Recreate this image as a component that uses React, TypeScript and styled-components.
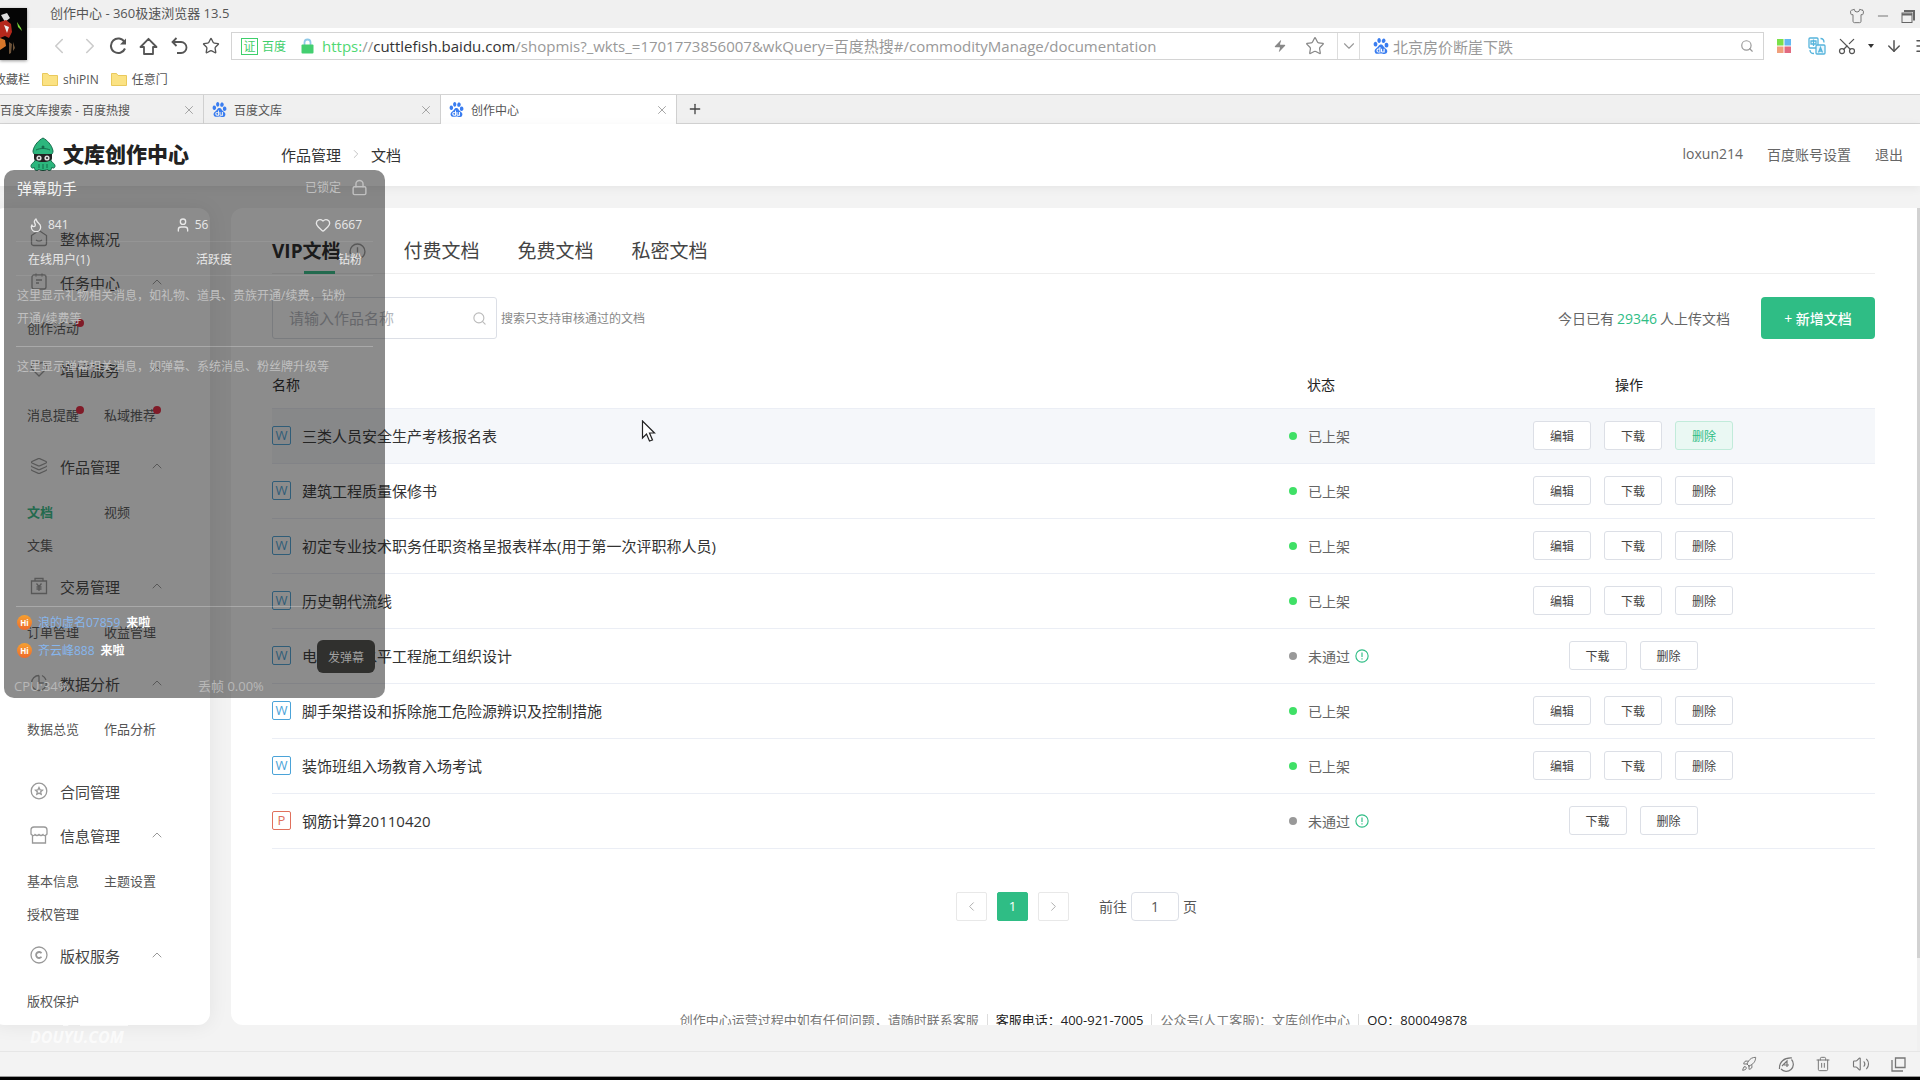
import React from 'react';
import styled, { createGlobalStyle } from 'styled-components';
import {
  ChevronLeft, ChevronRight, ChevronUp, ChevronDown, RotateCw, Star, Search, Scissors, ArrowDown,
  Shirt, Minus, Plus, X, Lock, Flame, User, Heart, Rocket, Trash2, Volume2, Menu, Zap, Layers,
} from 'lucide-react';
import { SiBaidu } from 'react-icons/si';

const GREEN = '#2fbd85';
const UI_FONT = '"Open Sans", "Noto Sans CJK SC", sans-serif';

const Global = createGlobalStyle`
  * { box-sizing: border-box; }
  body { margin: 0; overflow: hidden; font-family: ${UI_FONT}; font-size: 15px; color: #333; }
  button, input { font-family: inherit; margin: 0; }
  button { padding: 0; border: 0; background: none; cursor: pointer; color: inherit; }
  a { color: inherit; text-decoration: none; }
  svg { display: block; flex: none; }
`;

/* ---------- browser frame ---------- */

const Shell = styled.div`
  position: relative;
  display: flex;
  flex-direction: column;
  height: 100vh;
  overflow: hidden;
  background: #fff;
`;

const TitleBar = styled.header`
  display: flex;
  align-items: center;
  height: 28px;
  flex: none;
  padding: 0 5px 2px 50px;
  background: #f0f0f0;
  font-size: 13px;
  line-height: 18px;
  color: #555;
`;

const WindowControls = styled.div`
  display: flex;
  align-items: center;
  gap: 10px;
  margin: 6px 0 0 auto;
  color: #777;
`;

const ToolBar = styled.div`
  display: flex;
  align-items: center;
  height: 36px;
  flex: none;
  padding-left: 46px;
`;

const NavButtons = styled.div`
  display: flex;
  align-items: center;
  gap: 12px;
  width: 185px;
  flex: none;
`;

const NavButton = styled.button<{ $faded?: boolean }>`
  display: grid;
  place-items: center;
  width: 19px;
  height: 28px;
  color: ${(p) => (p.$faded ? '#ccc' : '#555')};
`;

const AddressBar = styled.div`
  display: flex;
  align-items: center;
  flex: 1;
  min-width: 0;
  height: 28px;
  padding-left: 9px;
  border: 1px solid #d4d4d4;
`;

const Cert = styled.span`
  display: grid;
  place-items: center;
  width: 17px;
  height: 17px;
  border: 1px solid #3ecf6b;
  font-size: 12px;
  line-height: 15px;
  color: #3ecf6b;
`;

const CertName = styled.span`
  margin: 0 15px 0 4px;
  font-size: 12px;
  color: #3ecf6b;
`;

const Url = styled.div`
  flex: 1;
  min-width: 0;
  padding-left: 8px;
  overflow: hidden;
  white-space: nowrap;
  font-size: 15px;
  line-height: 24px;
  color: #999;
`;

const Scheme = styled.span`
  color: #4fd873;
`;

const Domain = styled.span`
  color: #333;
`;

const AddressTools = styled.div`
  display: flex;
  align-items: center;
  gap: 18px;
  height: 100%;
  padding-right: 12px;
  color: #888;
`;

const DropButton = styled.button`
  display: grid;
  place-items: center;
  width: 23px;
  height: 26px;
  border: solid #ddd;
  border-width: 0 1px;
  color: #999;
`;

const WebSearch = styled.label`
  display: flex;
  align-items: center;
  gap: 4px;
  width: 403px;
  padding: 0 9px 0 13px;
  color: #999;

  input {
    flex: 1;
    min-width: 0;
    padding: 0;
    border: 0;
    outline: 0;
    background: none;
    font-size: 15px;
    color: #999;
  }
`;

const Extensions = styled.div`
  display: flex;
  align-items: center;
  gap: 11px;
  width: 156px;
  flex: none;
  padding-left: 13px;
  overflow: hidden;
  color: #555;

  svg:first-child { margin-right: 6px; }
`;

const UprightScissors = styled(Scissors)`
  transform: rotate(-90deg);
`;

const Bookmarks = styled.nav`
  display: flex;
  align-items: center;
  gap: 12px;
  height: 30px;
  flex: none;
  margin-left: -6px;
  font-size: 12px;
  color: #555;
`;

const Bookmark = styled.a`
  display: flex;
  align-items: center;
  gap: 5px;
`;

const TabStrip = styled.div`
  display: flex;
  height: 30px;
  flex: none;
  border: solid #d4d4d4;
  border-width: 1px 0;
  background: #f0f0f0;
  font-size: 12px;
  color: #555;
`;

const BrowserTab = styled.div<{ $width: number; $active?: boolean }>`
  display: flex;
  align-items: center;
  gap: 7px;
  width: ${(p) => p.$width}px;
  height: 29px;
  padding: 0 7px 0 ${(p) => (p.$width < 210 ? 0 : 8)}px;
  border-right: 1px solid #d0d0d0;
  background: ${(p) => (p.$active ? '#fff' : 'linear-gradient(#d4d4d4, #d4d4d4) bottom / 100% 1px no-repeat')};
  white-space: nowrap;

  span { flex: 1; }
  button { color: #999; }
`;

const NewTab = styled.button`
  display: grid;
  place-items: center;
  width: 36px;
  color: #444;
`;

const StatusBar = styled.footer`
  display: flex;
  align-items: center;
  justify-content: flex-end;
  gap: 21px;
  height: 26px;
  flex: none;
  padding-right: 14px;
  border-top: 1px solid #e6e6e6;
  border-bottom: 1px solid #999;
  background: #f3f3f3;
  color: #777;
`;

const Bezel = styled.div`
  height: 3px;
  flex: none;
  background: #000;
`;

/* ---------- page ---------- */

const Page = styled.div`
  display: flex;
  flex-direction: column;
  flex: 1;
  min-height: 0;
  background: #f3f3f3;
`;

const PageHeader = styled.header`
  position: relative;
  display: flex;
  align-items: center;
  height: 62px;
  flex: none;
  padding: 0 17px 2px 29px;
  background: #fff;
  box-shadow: 0 2px 10px rgba(0, 0, 0, 0.06);
`;

const Brand = styled.a`
  display: flex;
  align-items: center;
  gap: 6px;
  width: 252px;
  font-size: 21px;
  font-weight: 900;
  line-height: 28px;
  color: #222;
`;

const Breadcrumb = styled.nav`
  display: flex;
  align-items: center;
  gap: 8px;
  color: #333;

  svg { color: #bbb; }
`;

const Account = styled.nav`
  display: flex;
  gap: 24px;
  margin-left: auto;
  font-size: 14px;
  color: #666;
`;

const Body = styled.div`
  display: flex;
  flex: 1;
  min-height: 0;
  padding: 22px 0 0;
`;

const Sidebar = styled.aside`
  width: 218px;
  flex: none;
  margin: 0 21px 26px -8px;
  padding: 8px 0 0 35px;
  border-radius: 12px;
  overflow: hidden;
  background: #fff;
  box-shadow: 0 0 20px rgba(0, 0, 0, 0.07);
`;

const Group = styled.section<{ $space: number }>`
  padding-bottom: ${(p) => p.$space}px;
`;

const GroupTitle = styled.a`
  display: flex;
  align-items: center;
  height: 44px;
  padding: 0 45px 0 3px;
  font-size: 15px;
  color: #444;

  svg { color: #999; }
  span { flex: 1; margin-left: 12px; }
`;

const SubList = styled.div`
  display: grid;
  grid-template-columns: 77px 77px;
  padding-top: 8px;
`;

const SubLink = styled.a<{ $active?: boolean }>`
  height: 33px;
  font-size: 13px;
  line-height: 33px;
  font-weight: ${(p) => (p.$active ? 700 : 400)};
  color: ${(p) => (p.$active ? GREEN : '#555')};
`;

const Dotted = styled.span`
  position: relative;

  &::after {
    content: '';
    position: absolute;
    top: 0;
    right: -5px;
    width: 8px;
    height: 8px;
    border-radius: 50%;
    background: #e8233c;
  }
`;

const Main = styled.main`
  display: flex;
  flex-direction: column;
  flex: 1;
  min-width: 0;
  margin-bottom: 26px;
  padding: 0 42px 0 41px;
  border-radius: 12px 0 0 12px;
  overflow: hidden;
  background: #fff;
`;

const ScrollTrack = styled.div`
  width: 3px;
  flex: none;
  background: #f0f0f0;
`;

const ScrollThumb = styled.div`
  height: 89%;
  background: #d2d2d2;
`;

const DocTabs = styled.div`
  display: flex;
  gap: 38px;
  flex: none;
  padding: 31px 0 0;
  border-bottom: 1px solid #eee;
`;

const DocTab = styled.button<{ $active?: boolean }>`
  position: relative;
  display: flex;
  align-items: center;
  gap: 8px;
  height: 34px;
  padding-bottom: 9px;
  font-size: 19px;
  line-height: 25px;
  font-weight: ${(p) => (p.$active ? 700 : 400)};
  color: ${(p) => (p.$active ? '#222' : '#444')};

  &::after {
    content: '';
    display: ${(p) => (p.$active ? 'block' : 'none')};
    position: absolute;
    bottom: -1px;
    left: 50%;
    width: 31px;
    margin-left: -15px;
    height: 3px;
    background: ${GREEN};
  }
`;

const ActionBar = styled.div`
  display: flex;
  align-items: center;
  flex: none;
  margin-top: 23px;
`;

const DocSearch = styled.label`
  display: flex;
  align-items: center;
  width: 225px;
  height: 42px;
  padding: 0 9px 0 16px;
  border: 1px solid #dcdfe6;
  border-radius: 3px;
  color: #bbb;

  input {
    flex: 1;
    min-width: 0;
    padding: 0;
    border: 0;
    outline: 0;
    font-size: 15px;
    color: #333;
  }
  input::placeholder { color: #b4b7be; }
`;

const Hint = styled.span`
  margin-left: 4px;
  font-size: 12px;
  color: #888;
`;

const Today = styled.span`
  margin: 0 31px 0 auto;
  font-size: 14px;
  color: #666;

  b { margin: 0 3px; font-weight: 400; color: ${GREEN}; }
`;

const AddButton = styled.button`
  width: 114px;
  height: 42px;
  border-radius: 4px;
  background: ${GREEN};
  font-size: 14px;
  font-weight: 500;
  color: #fff;
`;

const DocTable = styled.table`
  width: 100%;
  flex: none;
  margin-top: 21px;
  border-collapse: collapse;
  table-layout: fixed;

  th {
    height: 48px;
    padding: 0;
    font-size: 14px;
    font-weight: 400;
    text-align: left;
    color: #222;
  }
  td {
    height: 55px;
    padding: 0;
    border: solid #ebeef5;
    border-width: 1px 0;
  }
  th:nth-child(2) { width: 102px; padding-left: 18px; white-space: nowrap; }
  th:nth-child(3) { width: 484px; padding-right: 8px; text-align: center; }
`;

const Row = styled.tr<{ $hover?: boolean }>`
  background: ${(p) => (p.$hover ? '#f5f7fa' : '#fff')};
`;

const DocName = styled.a`
  display: flex;
  align-items: center;
  gap: 11px;
  font-size: 15px;
  color: #333;
`;

const FileBadge = styled.span<{ $ppt?: boolean }>`
  display: grid;
  place-items: center;
  width: 19px;
  height: 19px;
  border: 1px solid currentColor;
  border-radius: 2px;
  font-size: 13px;
  line-height: 17px;
  color: ${(p) => (p.$ppt ? '#e0705c' : '#4ba3d8')};
`;

const Status = styled.div<{ $ok?: boolean }>`
  display: flex;
  align-items: center;
  gap: 5px;
  white-space: nowrap;
  font-size: 14px;
  color: #666;

  &::before {
    content: '';
    width: 8px;
    height: 8px;
    margin-right: 6px;
    border-radius: 50%;
    background: ${(p) => (p.$ok ? '#3fe066' : '#999')};
  }
`;

const Actions = styled.div`
  display: flex;
  justify-content: center;
  gap: 13px;
`;

const SmallButton = styled.button<{ $hot?: boolean }>`
  width: 58px;
  height: 29px;
  border: 1px solid ${(p) => (p.$hot ? '#c1ebda' : '#dcdfe6')};
  border-radius: 3px;
  background: ${(p) => (p.$hot ? '#eaf8f3' : '#fff')};
  font-size: 12px;
  color: ${(p) => (p.$hot ? GREEN : '#444')};
`;

const Pager = styled.nav`
  display: flex;
  align-items: center;
  justify-content: center;
  gap: 10px;
  flex: none;
  margin-top: 43px;
  padding-left: 6px;
  font-size: 14px;
  color: #555;
`;

const PageButton = styled.button<{ $current?: boolean }>`
  display: grid;
  place-items: center;
  width: 31px;
  height: 29px;
  border: 1px solid ${(p) => (p.$current ? GREEN : '#e8e8e8')};
  border-radius: 2px;
  background: ${(p) => (p.$current ? GREEN : '#fff')};
  color: ${(p) => (p.$current ? '#fff' : '#aaa')};
`;

const Jump = styled.label`
  display: flex;
  align-items: center;
  gap: 4px;
  margin-left: 20px;

  input {
    width: 48px;
    height: 29px;
    padding: 0;
    border: 1px solid #dcdfe6;
    border-radius: 4px;
    text-align: center;
    font-size: 14px;
    color: #555;
  }
`;

const Contact = styled.footer`
  display: flex;
  align-items: center;
  justify-content: center;
  flex: none;
  margin-top: 89px;
  font-size: 13px;
  line-height: 20px;
  color: #777;

  span + span { margin-left: 8px; padding-left: 9px; background: linear-gradient(#ddd, #ddd) left / 1px 12px no-repeat; }
`;

const Strong = styled.span`
  color: #222;
`;

/* ---------- streaming overlay ---------- */

const Overlay = styled.section`
  position: absolute;
  left: 4px;
  top: 170px;
  display: flex;
  flex-direction: column;
  width: 381px;
  height: 528px;
  padding: 0 12px;
  border-radius: 10px;
  background: rgba(20, 20, 20, 0.49);
  font-size: 12px;
  color: #c0c0c0;
`;

const OverlayHead = styled.div`
  display: flex;
  align-items: center;
  justify-content: space-between;
  height: 38px;
  padding: 0 5px 4px 1px;
`;

const OverlayTitle = styled.h2`
  margin: 0;
  font-size: 15px;
  font-weight: 400;
  color: #f2f2f2;
`;

const LockState = styled.span`
  display: flex;
  align-items: center;
  gap: 10px;
  font-size: 12px;
`;

const StatLine = styled.div<{ $height: number }>`
  display: flex;
  align-items: center;
  justify-content: space-between;
  height: ${(p) => p.$height}px;
  padding: 0 11px 0 12px;
  border-bottom: 1px solid rgba(255, 255, 255, 0.08);
  font-size: 12px;
  color: #e8e8e8;
`;

const Stat = styled.span`
  display: flex;
  align-items: center;
  gap: 4px;
`;

const Notice = styled.p<{ $height: number }>`
  height: ${(p) => p.$height}px;
  margin: 0;
  padding: 8px 24px 0 1px;
  border-bottom: 1px solid rgba(255, 255, 255, 0.25);
  font-size: 12px;
  line-height: 23px;
`;

const ChatArea = styled.div`
  display: flex;
  align-items: flex-end;
  justify-content: space-between;
`;

const Chat = styled.ul`
  margin: 0;
  padding: 1px 0 0 1px;
  list-style: none;
  font-size: 12px;

  li { display: flex; align-items: center; gap: 6px; height: 28px; color: #86b6ee; }
  b { color: #fff; }
`;

const Hi = styled.span`
  display: grid;
  place-items: center;
  width: 15px;
  height: 15px;
  border-radius: 50%;
  background: linear-gradient(#f5a030, #ee6a2c);
  font-size: 8px;
  font-weight: 700;
  line-height: 15px;
  color: #fff;
`;

const SendButton = styled.button`
  width: 58px;
  height: 33px;
  margin: 0 -2px -9px 0;
  border-radius: 6px;
  background: #30302e;
  font-size: 12px;
  color: #a0a0a0;
`;

const Metrics = styled.div`
  display: grid;
  grid-template-columns: 184px 1fr;
  margin-left: -2px;
  padding-top: 12px;
  line-height: 20px;
  font-size: 13px;
  color: #b8b8b8;
`;

const Avatar = styled.div`
  position: absolute;
  left: 0;
  top: 8px;
  box-shadow: 0 1px 3px rgba(0, 0, 0, 0.4);
`;

const Cursor = styled.svg`
  position: absolute;
  left: 641px;
  top: 420px;
`;

const Watermark = styled.div`
  position: absolute;
  left: 30px;
  bottom: 33px;
  font-size: 16px;
  font-style: italic;
  font-weight: 700;
  line-height: 20px;
  color: rgba(255, 255, 255, 0.7);
`;

/* ---------- drawings ---------- */

const Squid = () => (
  <svg width="28" height="35" viewBox="0 0 26 35">
    <path d="M13 1C9 3 4 8 3 14c0 2 1 3 2 4v6c-2 2-4 3-4 5s2 3 3 1c0 3 3 5 5 2 1 2 7 2 8 0 2 3 5 1 5-2 1 2 3 1 3-1s-2-3-4-5v-6c1-1 2-2 2-4C22 8 17 3 13 1z" fill="#2cb67d" stroke="#156b4b" strokeWidth="1" />
    <path d="M6 13c4-2 10-2 14 0" fill="none" stroke="#156b4b" />
    <circle cx="13" cy="10" r="1.5" fill="#156b4b" />
    <path d="M4 17h18v4c0 2-3 4-9 4s-9-2-9-4z" fill="#222" />
    <circle cx="9" cy="21" r="2.6" fill="#ddd" />
    <circle cx="17" cy="21" r="2.6" fill="#ddd" />
    <circle cx="9" cy="21" r="1" fill="#222" />
    <circle cx="17" cy="21" r="1" fill="#222" />
    <path d="M9 27v4M13 27v5M17 27v4" stroke="#156b4b" fill="none" />
  </svg>
);

const Folder = () => (
  <svg width="16" height="14" viewBox="0 0 16 14">
    <path d="M0.5 1.5h5l1.5 2h8.5v10h-15z" fill="#fbe283" stroke="#e9c95c" />
  </svg>
);

const PadLock = () => (
  <svg width="13" height="16" viewBox="0 0 13 16">
    <path d="M3.5 7V4.500a3 3 0 0 1 6 0V7" fill="none" stroke="#8fc9e8" strokeWidth="1.800" />
    <rect x="0.500" y="6.500" width="12" height="9" rx="1" fill="#43cf70" />
  </svg>
);

const ReloadIcon = () => (
  <svg width="18" height="18" viewBox="0 0 18 18" fill="none" stroke="currentColor" strokeWidth="2">
    <path d="M16 11.500A7.300 7.300 0 1 1 15.500 5" />
    <path d="M17 1.500v6h-6z" fill="currentColor" stroke="none" />
  </svg>
);

const HomeIcon = () => (
  <svg width="19" height="19" viewBox="0 0 19 19" fill="none" stroke="currentColor" strokeWidth="1.800">
    <path d="M1.500 10L9.500 1.800 17.500 10H14v7H5v-7z" strokeLinejoin="round" />
  </svg>
);

const UndoIcon = () => (
  <svg width="17" height="18" viewBox="0 0 17 18" fill="none" stroke="currentColor" strokeWidth="1.800">
    <path d="M5.500 1L1.500 5l4 4M1.500 5H10a5.500 5.500 0 0 1 0 11H6" />
  </svg>
);

const Tiles = () => (
  <svg width="14" height="14" viewBox="0 0 14 14">
    <rect width="6.500" height="6.500" fill="#7be04a" />
    <rect x="7.500" width="6.500" height="6.500" fill="#63b8f2" />
    <rect y="7.500" width="6.500" height="6.500" fill="#f0a07c" />
    <rect x="7.500" y="7.500" width="6.500" height="6.500" fill="#e26a80" />
  </svg>
);

const Translate = () => (
  <svg width="18" height="18" viewBox="0 0 18 18" fill="none" stroke="#56b4dc" strokeWidth="1.300">
    <rect x="1" y="1" width="9" height="10" rx="1" />
    <rect x="8" y="8" width="9" height="9" rx="1" fill="#eaf7fd" />
    <path d="M3 4h5v3H3zM5.500 2.500V9M10.500 15.500l2-5 2 5M11.500 14h2M12.500 1.500c2.500 0 3.500 1.500 3.500 4M2 13c0 2.500 1.500 3.500 4 3.500" />
  </svg>
);

const Restore = () => (
  <svg width="14" height="13" viewBox="0 0 14 13" fill="none" stroke="#666">
    <rect x="1" y="3" width="10" height="9.500" />
    <path d="M1 4.500h10M3 1h10v9.500" strokeWidth="2" />
  </svg>
);

const Info = ({ size, color }: { size: number; color: string }) => (
  <svg width={size} height={size} viewBox="0 0 16 16" fill="none" stroke={color} strokeWidth="1.300">
    <circle cx="8" cy="8" r="7" />
    <path d="M8 4v5M8 10.500V12" />
  </svg>
);

const MenuIcon = ({ kind }: { kind: string }) => {
  if (kind === 'layers') return <Layers size={18} strokeWidth={1.5} />;
  return (
    <svg width="18" height="18" viewBox="0 0 18 18" fill="none" stroke="currentColor" strokeWidth="1.300">
      {kind === 'home' && <path d="M1.500 6.500L9 1.500l7.500 5v8a2 2 0 0 1-2 2h-11a2 2 0 0 1-2-2zM6 11c2 1.500 4 1.500 6 0" />}
      {kind === 'task' && <path d="M4 2h10a2 2 0 0 1 2 2v10a2 2 0 0 1-2 2H4a2 2 0 0 1-2-2V4a2 2 0 0 1 2-2zM6 0.500v3M12 0.500v3M6 7h6M6 10h3" />}
      {kind === 'heart' && <path d="M9 16L2.500 9.500C0 6.500 2 2.500 5.500 2.500c2 0 3 1 3.500 2 .5-1 1.500-2 3.500-2 3.500 0 5.500 4 3 7z" />}
      {kind === 'trade' && <path d="M1.500 4h15v12.500h-15zM5 4V1.500h8V4M6.500 6.500L9 9.500l2.500-3M9 9.500V14M6.500 10h5M6.500 12h5" />}
      {kind === 'data' && <path d="M9 1.500A7.500 7.500 0 1 0 16.500 9M9 1.500V9h7.500M12 1.500A7.500 7.500 0 0 1 16 6" />}
      {kind === 'contract' && <><circle cx="9" cy="9" r="7.800" /><path d="M9 5.500l1.100 2.300 2.400.3-1.800 1.700.5 2.500L9 11.100l-2.200 1.200.5-2.500-1.800-1.700 2.400-.3z" /></>}
      {kind === 'shop' && <path d="M4 1h10a3 3 0 0 1 3 3v4c-1.500 2-3 2-4 .5-1.500 1.500-2.500 1.500-4 0-1.500 1.500-2.500 1.500-4 0C4 10 2.500 10 1 8V4a3 3 0 0 1 3-3zM2.500 10v7h13v-7" />}
      {kind === 'copyright' && <><circle cx="9" cy="9" r="8" /><path d="M11.500 7.200a3 3 0 1 0 0 3.600" strokeWidth="1.800" /></>}
    </svg>
  );
};

/* ---------- data ---------- */

type Sub = { text: string; dot?: boolean; active?: boolean };
const groups: { icon: string; title: string; subs?: Sub[]; space: number; flat?: boolean }[] = [
  { icon: 'home', title: '整体概况', space: 0, flat: true },
  { icon: 'task', title: '任务中心', space: 2, subs: [{ text: '创作活动', dot: true }] },
  { icon: 'heart', title: '增值服务', space: 12, subs: [{ text: '消息提醒', dot: true }, { text: '私域推荐', dot: true }] },
  { icon: 'layers', title: '作品管理', space: 2, subs: [{ text: '文档', active: true }, { text: '视频' }, { text: '文集' }] },
  { icon: 'trade', title: '交易管理', space: 12, subs: [{ text: '订单管理' }, { text: '收益管理' }] },
  { icon: 'data', title: '数据分析', space: 23, subs: [{ text: '数据总览' }, { text: '作品分析' }] },
  { icon: 'contract', title: '合同管理', space: 0, flat: true },
  { icon: 'shop', title: '信息管理', space: 2, subs: [{ text: '基本信息' }, { text: '主题设置' }, { text: '授权管理' }] },
  { icon: 'copyright', title: '版权服务', space: 2, subs: [{ text: '版权保护' }] },
];

const docs = [
  { name: '三类人员安全生产考核报名表', ok: true, hover: true },
  { name: '建筑工程质量保修书', ok: true },
  { name: '初定专业技术职务任职资格呈报表样本(用于第一次评职称人员)', ok: true },
  { name: '历史朝代流线', ok: true },
  { name: '电气安装水平工程施工组织设计', ok: false },
  { name: '脚手架搭设和拆除施工危险源辨识及控制措施', ok: true },
  { name: '装饰班组入场教育入场考试', ok: true },
  { name: '钢筋计算20110420', ok: false, ppt: true },
];

export default function App() {
  return (
    <Shell>
      <Global />
      <TitleBar>
        创作中心 - 360极速浏览器 13.5
        <WindowControls>
          <button aria-label="皮肤"><Shirt size={16} strokeWidth={1.5} /></button>
          <button aria-label="最小化"><Minus size={16} strokeWidth={1.5} /></button>
          <button aria-label="还原"><Restore /></button>
        </WindowControls>
      </TitleBar>

      <ToolBar>
        <NavButtons>
          <NavButton $faded aria-label="后退"><ChevronLeft size={26} strokeWidth={1.5} /></NavButton>
          <NavButton $faded aria-label="前进"><ChevronRight size={26} strokeWidth={1.5} /></NavButton>
          <NavButton aria-label="刷新"><ReloadIcon /></NavButton>
          <NavButton aria-label="主页"><HomeIcon /></NavButton>
          <NavButton aria-label="恢复"><UndoIcon /></NavButton>
          <NavButton aria-label="收藏"><Star size={18} strokeWidth={1.8} /></NavButton>
        </NavButtons>
        <AddressBar>
          <Cert>证</Cert>
          <CertName>百度</CertName>
          <PadLock />
          <Url>
            <Scheme>https:</Scheme>//<Domain>cuttlefish.baidu.com</Domain>
            /shopmis?_wkts_=1701773856007&amp;wkQuery=百度热搜#/commodityManage/documentation
          </Url>
          <AddressTools>
            <Zap size={14} fill="currentColor" strokeWidth={0} />
            <Star size={20} strokeWidth={1.5} />
          </AddressTools>
          <DropButton aria-label="展开"><ChevronDown size={18} strokeWidth={1.5} /></DropButton>
          <WebSearch>
            <SiBaidu size={16} color="#3a7df0" />
            <input aria-label="搜索" defaultValue="北京房价断崖下跌" />
            <Search size={14} />
          </WebSearch>
        </AddressBar>
        <Extensions>
          <Tiles />
          <Translate />
          <UprightScissors size={20} strokeWidth={1.5} />
          <svg width="6" height="4" viewBox="0 0 6 4"><path d="M0 0h6L3 4z" fill="#333" /></svg>
          <ArrowDown size={18} />
          <Menu size={18} />
        </Extensions>
      </ToolBar>

      <Bookmarks>
        <Bookmark href="#">收藏栏</Bookmark>
        <Bookmark href="#"><Folder />shiPIN</Bookmark>
        <Bookmark href="#"><Folder />任意门</Bookmark>
      </Bookmarks>

      <TabStrip>
        <BrowserTab $width={204}><span>百度文库搜索 - 百度热搜</span><button aria-label="关闭"><X size={14} strokeWidth={1.5} /></button></BrowserTab>
        <BrowserTab $width={237}><SiBaidu size={15} color="#3a7df0" /><span>百度文库</span><button aria-label="关闭"><X size={14} strokeWidth={1.5} /></button></BrowserTab>
        <BrowserTab $width={236} $active><SiBaidu size={15} color="#3a7df0" /><span>创作中心</span><button aria-label="关闭"><X size={14} strokeWidth={1.5} /></button></BrowserTab>
        <NewTab aria-label="新标签页"><Plus size={16} /></NewTab>
      </TabStrip>

      <Page>
        <PageHeader>
          <Brand href="#"><Squid />文库创作中心</Brand>
          <Breadcrumb>
            <a href="#">作品管理</a>
            <ChevronRight size={14} strokeWidth={1.5} />
            <span>文档</span>
          </Breadcrumb>
          <Account>
            <a href="#">loxun214</a>
            <a href="#">百度账号设置</a>
            <a href="#">退出</a>
          </Account>
        </PageHeader>

        <Body>
          <Sidebar>
            {groups.map((g) => (
              <Group key={g.title} $space={g.space}>
                <GroupTitle href="#">
                  <MenuIcon kind={g.icon} />
                  <span>{g.title}</span>
                  {!g.flat && <ChevronUp size={16} strokeWidth={1.5} />}
                </GroupTitle>
                {g.subs && (
                  <SubList>
                    {g.subs.map((s) => (
                      <SubLink key={s.text} href="#" $active={s.active}>
                        {s.dot ? <Dotted>{s.text}</Dotted> : s.text}
                      </SubLink>
                    ))}
                  </SubList>
                )}
              </Group>
            ))}
          </Sidebar>

          <Main>
            <DocTabs>
              <DocTab $active>VIP文档<Info size={17} color="#999" /></DocTab>
              <DocTab>付费文档</DocTab>
              <DocTab>免费文档</DocTab>
              <DocTab>私密文档</DocTab>
            </DocTabs>

            <ActionBar>
              <DocSearch>
                <input aria-label="作品名称" placeholder="请输入作品名称" />
                <Search size={15} strokeWidth={1.8} />
              </DocSearch>
              <Hint>搜索只支持审核通过的文档</Hint>
              <Today>今日已有<b>29346</b>人上传文档</Today>
              <AddButton>+ 新增文档</AddButton>
            </ActionBar>

            <DocTable>
              <thead>
                <tr><th>名称</th><th>状态</th><th>操作</th></tr>
              </thead>
              <tbody>
                {docs.map((d) => (
                  <Row key={d.name} $hover={d.hover}>
                    <td>
                      <DocName href="#"><FileBadge $ppt={d.ppt}>{d.ppt ? 'P' : 'W'}</FileBadge>{d.name}</DocName>
                    </td>
                    <td>
                      <Status $ok={d.ok}>
                        {d.ok ? '已上架' : '未通过'}
                        {!d.ok && <Info size={14} color={GREEN} />}
                      </Status>
                    </td>
                    <td>
                      <Actions>
                        {d.ok && <SmallButton>编辑</SmallButton>}
                        <SmallButton>下载</SmallButton>
                        <SmallButton $hot={d.hover}>删除</SmallButton>
                      </Actions>
                    </td>
                  </Row>
                ))}
              </tbody>
            </DocTable>

            <Pager>
              <PageButton aria-label="上一页"><ChevronLeft size={15} strokeWidth={1.5} /></PageButton>
              <PageButton $current>1</PageButton>
              <PageButton aria-label="下一页"><ChevronRight size={15} strokeWidth={1.5} /></PageButton>
              <Jump>前往<input defaultValue="1" />页</Jump>
            </Pager>

            <Contact>
              <span>创作中心运营过程中如有任何问题，请随时联系客服</span>
              <Strong>客服电话：400-921-7005</Strong>
              <span>公众号(人工客服)：文库创作中心</span>
              <Strong>QQ：800049878</Strong>
            </Contact>
          </Main>
          <ScrollTrack><ScrollThumb /></ScrollTrack>
        </Body>
      </Page>

      <StatusBar>
        <Rocket size={16} strokeWidth={1.5} />
        <svg width="16" height="16" viewBox="0 0 16 16" fill="none" stroke="currentColor" strokeWidth="1.200">
          <path d="M13.500 3.500A7 7 0 1 1 3 13M1.500 13C1 6 6 1.500 14 2M4 10l5-5v6M6 9h5" />
        </svg>
        <Trash2 size={16} strokeWidth={1.5} />
        <Volume2 size={18} strokeWidth={1.5} />
        <svg width="15" height="15" viewBox="0 0 15 15" fill="none" stroke="currentColor" strokeWidth="1.300">
          <path d="M4.500 1h9.500v9.500H4.500zM1 3v11h11" />
        </svg>
      </StatusBar>
      <Bezel />

      <Avatar>
        <svg width="27" height="52" viewBox="0 0 27 52">
          <rect width="27" height="52" fill="#050505" />
          <path d="M1 7l6-2 3 5-5 4z" fill="#ddd" />
          <path d="M0 14l6-2 5 4 1 8-3 6-4-2-5 2z" fill="#b5281c" />
          <path d="M4 17l3 8 2-6z" fill="#eee" />
          <path d="M0 30l5 2 1 6-6 4z" fill="#d8772a" />
          <path d="M17 14l4 6 1 3-4-4z" fill="#7bd63a" />
          <path d="M9 34l3 2-1 9-2 1zM13 34l2 6-2 3z" fill="#6f543a" />
        </svg>
      </Avatar>

      <Watermark>
        <svg width="100" height="6" viewBox="0 0 100 6" fill="currentColor">
          <path d="M33 0h8l-3 5h-5zM50 1h48v4H50z" />
        </svg>
        DOUYU.COM
      </Watermark>

      <Overlay>
        <OverlayHead>
          <OverlayTitle>弹幕助手</OverlayTitle>
          <LockState>已锁定<Lock size={17} /></LockState>
        </OverlayHead>
        <StatLine $height={34}>
          <Stat><Flame size={16} />841</Stat>
          <Stat><User size={16} />56</Stat>
          <Stat><Heart size={16} />6667</Stat>
        </StatLine>
        <StatLine $height={34}>
          <span>在线用户(1)</span>
          <span>活跃度</span>
          <span>钻粉</span>
        </StatLine>
        <Notice $height={71}>这里显示礼物相关消息，如礼物、道具、贵族开通/续费，钻粉开通/续费等</Notice>
        <Notice $height={260}>这里显示弹幕相关消息，如弹幕、系统消息、粉丝牌升级等</Notice>
        <ChatArea>
          <Chat>
            <li><Hi>Hi</Hi>浪的虚名07859 <b>来啦</b></li>
            <li><Hi>Hi</Hi>齐云峰888 <b>来啦</b></li>
          </Chat>
          <SendButton>发弹幕</SendButton>
        </ChatArea>
        <Metrics>
          <span>CPU:34%</span>
          <span>丢帧 0.00%</span>
        </Metrics>
      </Overlay>

      <Cursor width="15" height="22" viewBox="0 0 15 22">
        <path d="M1.500 1v17l4-4 3 7 3-1-3-7h5z" fill="#fff" stroke="#222" strokeWidth="1.200" />
      </Cursor>
    </Shell>
  );
}
